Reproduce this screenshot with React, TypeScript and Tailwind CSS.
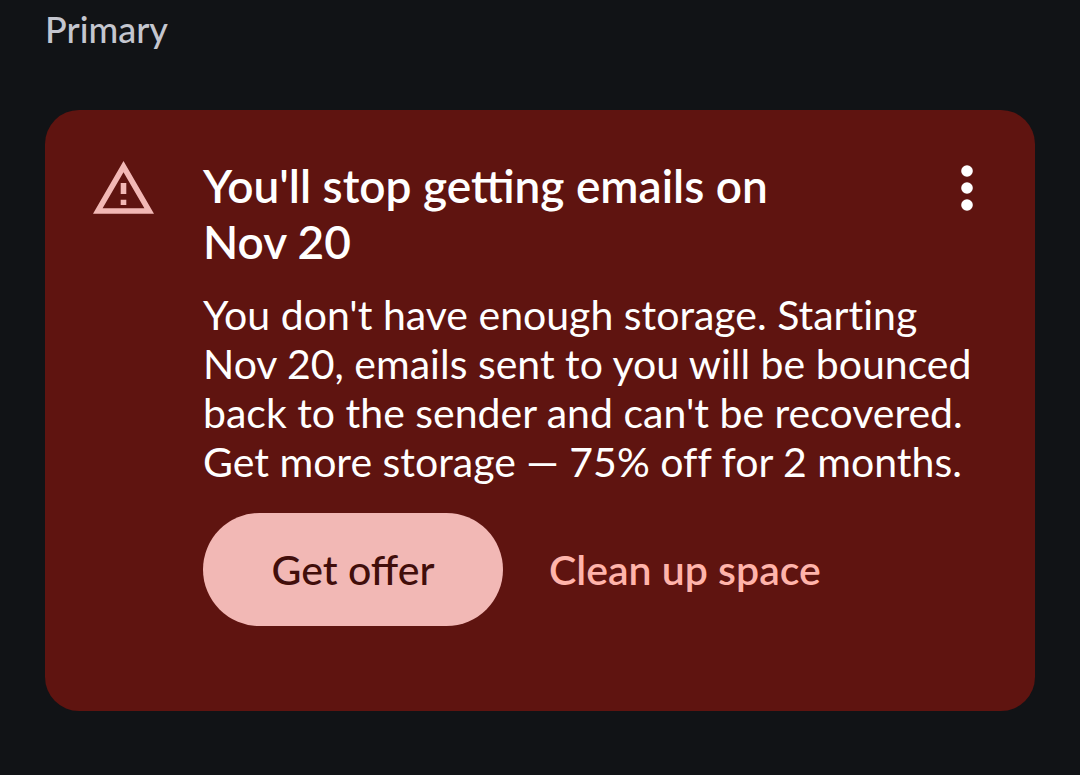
import React from 'react';

const WarningIcon: React.FC = () => (
  <svg viewBox="0 0 61 53" className="mt-px mr-px w-[61px] h-[53px] shrink-0" aria-hidden="true">
    <path
      fill="#f2b8b5"
      fillRule="evenodd"
      d="M30.5 0 L61 52.7 H0 Z M30.5 11.3 L9.6 47.2 H51.4 Z"
    />
    <path fill="#f2b8b5" d="M27.7 22h5.6v11h-5.6z M27.7 38.7h5.6v5.4h-5.6z" />
  </svg>
);

const MoreIcon: React.FC = () => (
  <svg viewBox="0 0 12 46" className="w-3 h-[46px]" aria-hidden="true">
    <g fill="#ffffff">
      <circle cx="6" cy="6" r="5.8" />
      <circle cx="6" cy="23" r="5.8" />
      <circle cx="6" cy="40" r="5.8" />
    </g>
  </svg>
);

export default function App() {
  return (
    <main className="min-h-screen bg-[#111316] px-[45px] pt-1.5 pb-16 font-['Lato','Liberation_Sans',sans-serif]">
      <h1 className="text-[36px] leading-[46px] font-medium text-[#c4c6cf]">Primary</h1>

      <section className="mt-[58px] flex items-start rounded-[34px] bg-[#5f1410] px-12 pt-[50px] pb-[85px]">
        <WarningIcon />

        <div className="ml-12 flex-1 text-white">
          <div className="flex items-start justify-between">
            <h2 className="-mt-0.5 text-[46px] leading-[56px] font-semibold">
              You'll stop getting emails on
              <br />
              Nov 20
            </h2>
            <button type="button" aria-label="More options" className="mt-[5px] mr-3.5">
              <MoreIcon />
            </button>
          </div>

          <p className="mt-5 text-[41px] leading-[49px] whitespace-nowrap [font-variant-ligatures:none]">
            You don't have enough storage. Starting
            <br />
            Nov 20, emails sent to you will be bounced
            <br />
            back to the sender and can't be recovered.
            <br />
            Get more storage — 75% off for 2 months.
          </p>

          <div className="mt-[27px] flex items-center gap-[46px]">
            <button
              type="button"
              className="h-[113px] w-[300px] rounded-full bg-[#f2b8b5] text-[41px] font-medium text-[#410e0b]"
            >
              Get offer
            </button>
            <button type="button" className="text-[41px] font-semibold text-[#ffb4ab]">
              Clean up space
            </button>
          </div>
        </div>
      </section>
    </main>
  );
}
